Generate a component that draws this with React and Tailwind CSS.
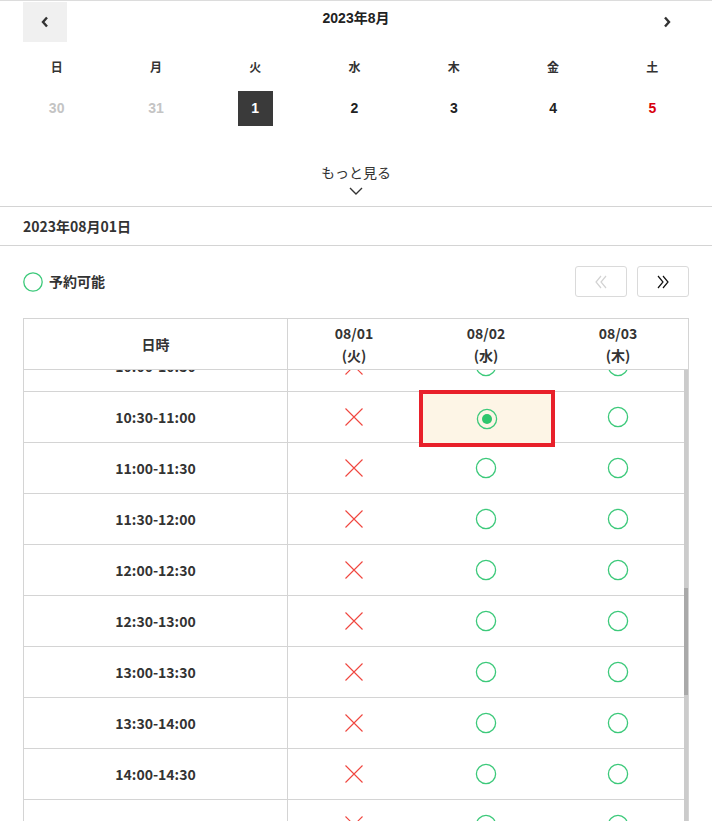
import React from "react";

const jp = "font-['Noto_Sans_CJK_JP',sans-serif]";
const cal = "font-['Liberation_Sans','Noto_Sans_CJK_JP',sans-serif]";

const weekdays = ["日", "月", "火", "水", "木", "金", "土"];
const days = [
  { d: 30, tone: "muted" },
  { d: 31, tone: "muted" },
  { d: 1, tone: "selected" },
  { d: 2 },
  { d: 3 },
  { d: 4 },
  { d: 5, tone: "sat" },
];

const times = [
  "10:00-10:30",
  "10:30-11:00",
  "11:00-11:30",
  "11:30-12:00",
  "12:00-12:30",
  "12:30-13:00",
  "13:00-13:30",
  "13:30-14:00",
  "14:00-14:30",
  "14:30-15:00",
  "15:00-15:30",
];

function Circle() {
  return (
    <svg width="22" height="22" viewBox="0 0 22 22">
      <circle cx="11" cy="11" r="9.6" fill="none" stroke="#3cc97a" strokeWidth="1.3" />
    </svg>
  );
}

function Picked() {
  return (
    <svg width="22" height="22" viewBox="0 0 22 22">
      <circle cx="11" cy="11" r="9.6" fill="none" stroke="#3cc97a" strokeWidth="1.3" />
      <circle cx="11" cy="11" r="5" fill="#2ec66c" />
    </svg>
  );
}

function Cross() {
  return (
    <svg width="20" height="20" viewBox="0 0 20 20">
      <path d="M1.5 1.5 L18.5 18.5 M18.5 1.5 L1.5 18.5" stroke="#f0463f" strokeWidth="1.1" fill="none" />
    </svg>
  );
}

function Chevron({ dir }) {
  return (
    <svg width="8" height="12" viewBox="0 0 8 12">
      <path
        d={dir === "left" ? "M6 1.5 L2 6 L6 10.5" : "M2 1.5 L6 6 L2 10.5"}
        stroke="#333"
        strokeWidth="2.4"
        fill="none"
      />
    </svg>
  );
}

function Double({ dir, color }) {
  const d =
    dir === "left"
      ? "M7 1 L2 7 L7 13 M12 1 L7 7 L12 13"
      : "M2 1 L7 7 L2 13 M7 1 L12 7 L7 13";
  return (
    <svg width="14" height="14" viewBox="0 0 14 14">
      <path d={d} stroke={color} strokeWidth="1.2" fill="none" />
    </svg>
  );
}

function DayCell({ d, tone }) {
  if (tone === "selected") {
    return (
      <div className="flex h-[35px] w-[35px] items-center justify-center bg-[#3a3a3a] text-[14px] font-bold text-white">
        {d}
      </div>
    );
  }
  const color =
    tone === "muted" ? "text-[#c4c4c4]" : tone === "sat" ? "text-[#d8000c]" : "text-[#222]";
  return (
    <div className={`flex h-[35px] items-center justify-center text-[14px] font-bold ${color}`}>
      {d}
    </div>
  );
}

export default function App() {
  return (
    <div className={`min-h-[821px] w-[712px] bg-white text-[#333] ${jp}`}>
      {/* calendar */}
      <div className={`border-t border-[#dcdcdc] ${cal}`}>
        <div className="flex h-[41px] items-start justify-between px-[23px]">
          <button className="mt-[1px] flex h-[40px] w-[44px] items-center justify-center bg-[#f0f0f0]">
            <Chevron dir="left" />
          </button>
          <div className="pt-[8px] text-[14px] font-bold leading-[18px] text-[#222]">2023年8月</div>
          <button className="mt-[1px] flex h-[40px] w-[44px] items-center justify-center">
            <Chevron dir="right" />
          </button>
        </div>

        <div className="ml-[7px] mt-[16px] grid w-[695px] grid-cols-7">
          {weekdays.map((w) => (
            <div key={w} className="flex h-[20px] items-center justify-center text-[12px] font-bold text-[#333]">
              {w}
            </div>
          ))}
        </div>

        <div className="ml-[7px] mt-[13px] grid w-[695px] grid-cols-7">
          {days.map((x) => (
            <div key={x.d} className="flex justify-center">
              <DayCell {...x} />
            </div>
          ))}
        </div>
      </div>

      <div className="mt-[36px] flex flex-col items-center pb-[11px]">
        <span className="text-[14px] leading-[20px] text-[#333]">もっと見る</span>
        <svg className="mt-[5px]" width="14" height="8" viewBox="0 0 14 8">
          <path d="M1 1 L7 7 L13 1" stroke="#333" strokeWidth="1.4" fill="none" />
        </svg>
      </div>

      <div className="flex h-[40px] items-center border-y border-[#d4d4d4] px-[23px] text-[14px] font-bold text-[#333]">
        2023年08月01日
      </div>

      {/* legend + paging */}
      <div className="mt-[20px] flex h-[31px] items-center justify-between px-[23px]">
        <div className="flex items-center gap-[6px]">
          <svg width="20" height="20" viewBox="0 0 20 20">
            <circle cx="10" cy="10" r="9.2" fill="none" stroke="#3cc97a" strokeWidth="1.3" />
          </svg>
          <span className="text-[14px] font-bold text-[#333]">予約可能</span>
        </div>
        <div className="flex gap-[10px]">
          <button className="flex h-[31px] w-[52px] items-center justify-center rounded-[3px] border border-[#dadada] bg-white">
            <Double dir="left" color="#d2d2d2" />
          </button>
          <button className="flex h-[31px] w-[52px] items-center justify-center rounded-[3px] border border-[#dadada] bg-white">
            <Double dir="right" color="#111" />
          </button>
        </div>
      </div>

      {/* table */}
      <div className="ml-[23px] mt-[21px] w-[666px] border-x border-t border-[#d4d4d4]">
        <div className="grid h-[51px] grid-cols-[264px_132px_132px_132px] border-b border-[#d4d4d4] text-[14px] font-bold leading-[22px] text-[#333]">
          <div className="flex items-center justify-center border-r border-[#d4d4d4]">日時</div>
          {[
            ["08/01", "(火)"],
            ["08/02", "(水)"],
            ["08/03", "(木)"],
          ].map(([a, b]) => (
            <div key={a} className="flex flex-col items-center justify-center">
              <span>{a}</span>
              <span>{b}</span>
            </div>
          ))}
        </div>

        <div className="flex h-[451px] overflow-hidden">
          <div className="-mt-[29px] w-[660px] shrink-0">
            {times.map((t, i) => (
              <div
                key={t}
                className="grid h-[51px] grid-cols-[264px_132px_132px_132px] border-b border-[#d4d4d4]"
              >
                <div className="flex items-center justify-center border-r border-[#d4d4d4] text-[14px] font-bold text-[#333]">
                  {t}
                </div>
                <div className="flex items-center justify-center">
                  <Cross />
                </div>
                <div className="relative flex items-center justify-center">
                  {i === 1 && (
                    <div className="absolute -top-[2px] -left-[1px] z-10 flex h-[57px] w-[136px] items-center justify-center border-4 border-[#e8202a] bg-[#fdf5e6]">
                      <Picked />
                    </div>
                  )}
                  {i !== 1 && <Circle />}
                </div>
                <div className="flex items-center justify-center">
                  <Circle />
                </div>
              </div>
            ))}
          </div>
          <div className="w-[4px] shrink-0 bg-[#cbcbcb]">
            <div className="mt-[218px] h-[107px] bg-[#a9a9a9]" />
          </div>
        </div>
      </div>
    </div>
  );
}
